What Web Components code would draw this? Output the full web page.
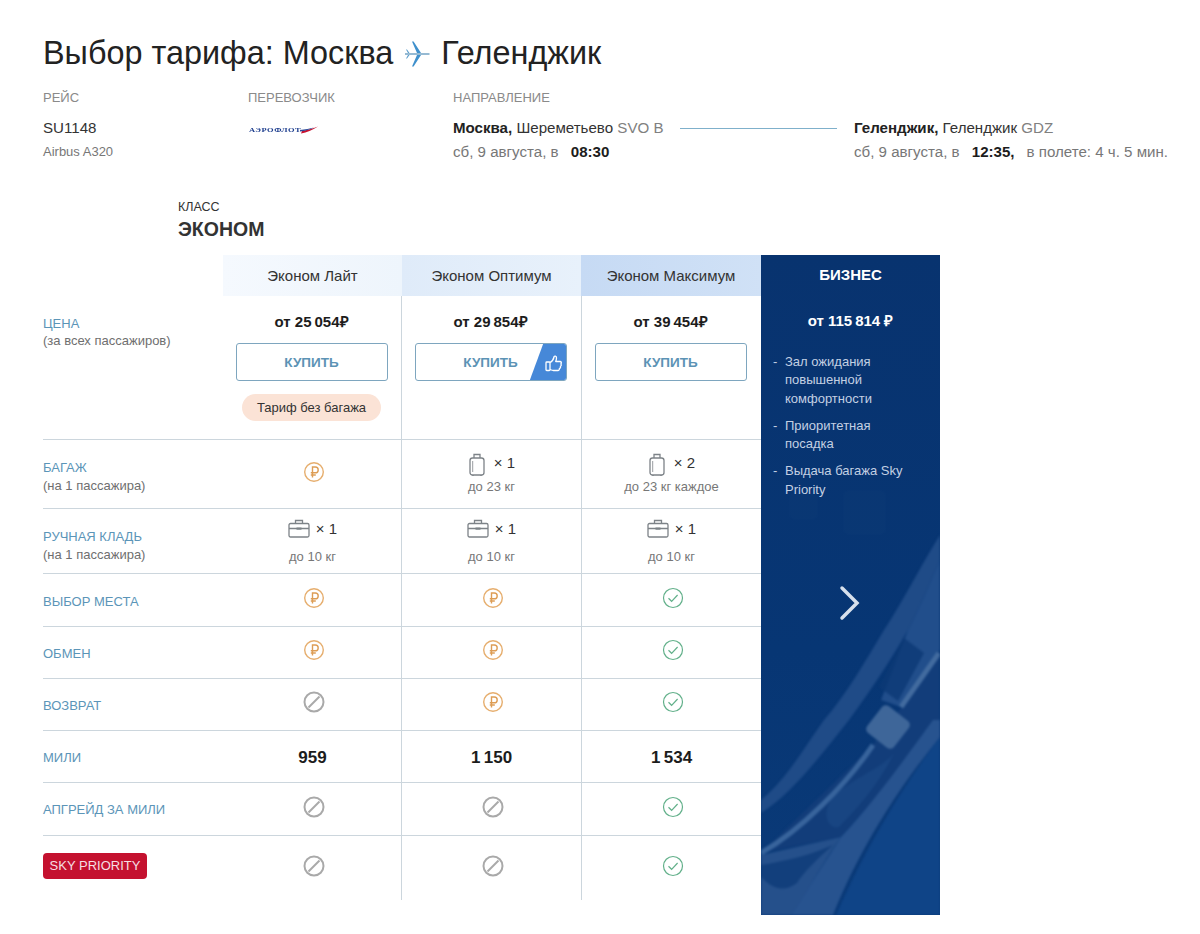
<!DOCTYPE html>
<html lang="ru">
<head>
<meta charset="utf-8">
<title>Выбор тарифа</title>
<style>
  html, body { margin: 0; background: #fff; }
  body { font-family: "Liberation Sans", Arial, sans-serif; color: #1c1c1c; }
</style>
</head>
<body>
<fare-page>
  <flight-head></flight-head>
  <fare-class>ЭКОНОМ</fare-class>
  <fare-board>
    <fare-header>
      <fare-title slot="a" tone="lite">Эконом Лайт</fare-title>
      <fare-title slot="b" tone="optimum">Эконом Оптимум</fare-title>
      <fare-title slot="c" tone="max">Эконом Максимум</fare-title>
    </fare-header>

    <fare-row style="height:144px" align="top" label="ЦЕНА" note="(за всех пассажиров)">
      <fare-price slot="a" price="от 25&#8201;054" chip="Тариф без багажа"></fare-price>
      <fare-price slot="b" price="от 29&#8201;854" liked></fare-price>
      <fare-price slot="c" price="от 39&#8201;454"></fare-price>
    </fare-row>
    <fare-row style="height:69px" label="БАГАЖ" note="(на 1 пассажира)">
      <fare-icon slot="a" type="rub"></fare-icon>
      <bag-info slot="b" kind="case" count="× 1" limit="до 23 кг"></bag-info>
      <bag-info slot="c" kind="case" count="× 2" limit="до 23 кг каждое"></bag-info>
    </fare-row>
    <fare-row style="height:65px;--label-pad:10px" label="РУЧНАЯ КЛАДЬ" note="(на 1 пассажира)">
      <bag-info slot="a" kind="brief" count="× 1" limit="до 10 кг"></bag-info>
      <bag-info slot="b" kind="brief" count="× 1" limit="до 10 кг"></bag-info>
      <bag-info slot="c" kind="brief" count="× 1" limit="до 10 кг"></bag-info>
    </fare-row>
    <fare-row style="height:53px" label="ВЫБОР МЕСТА">
      <fare-icon slot="a" type="rub"></fare-icon>
      <fare-icon slot="b" type="rub"></fare-icon>
      <fare-icon slot="c" type="ok"></fare-icon>
    </fare-row>
    <fare-row style="height:52px" label="ОБМЕН">
      <fare-icon slot="a" type="rub"></fare-icon>
      <fare-icon slot="b" type="rub"></fare-icon>
      <fare-icon slot="c" type="ok"></fare-icon>
    </fare-row>
    <fare-row style="height:52px" label="ВОЗВРАТ">
      <fare-icon slot="a" type="no"></fare-icon>
      <fare-icon slot="b" type="rub"></fare-icon>
      <fare-icon slot="c" type="ok"></fare-icon>
    </fare-row>
    <fare-row style="height:52px" label="МИЛИ">
      <fare-miles slot="a">959</fare-miles>
      <fare-miles slot="b">1&#8201;150</fare-miles>
      <fare-miles slot="c">1&#8201;534</fare-miles>
    </fare-row>
    <fare-row style="height:53px;--label-pad:0px" label="АПГРЕЙД ЗА МИЛИ">
      <fare-icon slot="a" type="no"></fare-icon>
      <fare-icon slot="b" type="no"></fare-icon>
      <fare-icon slot="c" type="ok"></fare-icon>
    </fare-row>
    <fare-row style="height:65px" last>
      <sky-badge slot="label">SKY PRIORITY</sky-badge>
      <fare-icon slot="a" type="no"></fare-icon>
      <fare-icon slot="b" type="no"></fare-icon>
      <fare-icon slot="c" type="ok"></fare-icon>
    </fare-row>

    <business-panel slot="side"></business-panel>
  </fare-board>
</fare-page>

<script>
/**
 * Small helper: every element gets an open shadow root with its own markup.
 */
function render(el, html) {
    if (!el.shadowRoot) el.attachShadow({mode: "open"});
    el.shadowRoot.innerHTML = html;
}

class FarePage extends HTMLElement {
    connectedCallback() {
        render(this, `
            <style>
                :host { display: block; padding: 32px 0 19px 43px; }
            </style>
            <slot></slot>`);
    }
}

class FlightHead extends HTMLElement {
    connectedCallback() {
        render(this, `
            <style>
                :host { display: block; }
                h1 { margin: 0; font: 400 32.4px/42px "Liberation Sans", sans-serif; color: #222; display: flex; align-items: center; }
                h1 svg { margin: 1px 11px 0 11px; }
                .cols { display: flex; margin-top: 17px; }
                .flight { width: 205px; }
                .carrier { width: 205px; }
                .cap { font-size: 13px; line-height: 14px; color: #8a8a8a; }
                .val { font-size: 15.1px; line-height: 18px; margin-top: 14px; color: #333; white-space: nowrap; }
                .sub { font-size: 13px; line-height: 16px; margin-top: 7px; color: #777; }
                .time { font-size: 15.1px; line-height: 18px; margin-top: 6px; color: #777; white-space: nowrap; }
                .time b { color: #1c1c1c; margin: 0 8px; }
                .time b.mid { margin-right: 12px; }
                .grey { color: #808080; }
                .route { display: flex; }
                .from { width: 227px; }
                .line { width: 157px; height: 1px; background: #7fb0cb; margin: 23px 17px 0 0; }
                .logo { display: flex; align-items: center; margin-top: 17px; height: 16px; }
                .logo span { font: 700 6.4px/8px "Liberation Serif", serif; letter-spacing: .35px; color: #1f3f8f; transform: scaleX(1.32); transform-origin: left; margin-left: 1px; width: 52px; white-space: nowrap; }
                .logo svg { margin-left: -1px; }
            </style>
            <h1>Выбор тарифа: Москва
                <svg width="26" height="26" viewBox="0 0 26 26">
                    <path d="M1 12.400H25.500V13.600H1z" fill="#4f8cb5"/>
                    <path d="M8 .5h1.600L17 12h-4zM8 25.500h1.600L17 14h-4z" fill="#3f90cc"/>
                    <path d="M2 8.500h1L5.500 12h-1.500zM2 17.500h1L5.500 14h-1.500z" fill="#5b9ccb"/>
                </svg>
                Геленджик</h1>
            <div class="cols">
                <div class="flight">
                    <div class="cap">РЕЙС</div>
                    <div class="val">SU1148</div>
                    <div class="sub">Airbus A320</div>
                </div>
                <div class="carrier">
                    <div class="cap">ПЕРЕВОЗЧИК</div>
                    <div class="logo"><span>АЭРОФЛОТ</span>
                        <svg width="18" height="8" viewBox="0 0 18 8"><path d="M1 7.500C7 6.500 12 4 18 .5 14 2 8 4 2 5z" fill="#c8102e"/><path d="M0 5.500C5 5 10 3.500 14 1.500 10 2.500 5 3.500 0 4z" fill="#2a4a9a"/></svg>
                    </div>
                </div>
                <div>
                    <div class="cap">НАПРАВЛЕНИЕ</div>
                    <div class="route">
                        <div class="from">
                            <div class="val"><b style="color:#222">Москва,</b> Шереметьево <span class="grey">SVO B</span></div>
                            <div class="time">сб, 9 августа, в <b>08:30</b></div>
                        </div>
                        <div class="line"></div>
                        <div>
                            <div class="val"><b style="color:#222">Геленджик,</b> Геленджик <span class="grey">GDZ</span></div>
                            <div class="time">сб, 9 августа, в <b class="mid">12:35,</b>в полете: 4 ч. 5 мин.</div>
                        </div>
                    </div>
                </div>
            </div>`);
    }
}

class FareClass extends HTMLElement {
    connectedCallback() {
        render(this, `
            <style>
                :host { display: block; margin: 39px 0 0 135px; }
                .cap { font-size: 12.5px; line-height: 14px; color: #333; }
                .name { font-size: 19.5px; line-height: 24px; font-weight: 700; color: #333; margin-top: 3px; }
            </style>
            <div class="cap">КЛАСС</div>
            <div class="name"><slot></slot></div>`);
    }
}

class FareBoard extends HTMLElement {
    connectedCallback() {
        render(this, `
            <style>
                :host { display: flex; align-items: flex-start; margin-top: 14px; }
                .rows { width: 718px; }
            </style>
            <div class="rows"><slot></slot></div>
            <slot name="side"></slot>`);
    }
}

/* columns of the board: label, then the three economy fares */
const COLS = "180px 179px 179px 180px";

class FareHeader extends HTMLElement {
    connectedCallback() {
        render(this, `
            <style>
                :host { display: grid; grid-template-columns: ${COLS}; height: 41px; }
                .gap { grid-column: 1; }
            </style>
            <div class="gap"></div>
            <slot name="a"></slot><slot name="b"></slot><slot name="c"></slot>`);
    }
}

class FareTitle extends HTMLElement {
    connectedCallback() {
        const bg = {
            lite: "linear-gradient(90deg,#f5f9fe,#eef5fc)",
            optimum: "linear-gradient(90deg,#dfebf9,#e8f1fb)",
            max: "linear-gradient(90deg,#c6daf4,#d0e1f6)"
        }[this.getAttribute("tone")];
        render(this, `
            <style>
                :host { display: flex; align-items: center; justify-content: center; background: ${bg}; font-size: 15px; color: #333; }
            </style>
            <slot></slot>`);
    }
}

class FareRow extends HTMLElement {
    connectedCallback() {
        const top = this.getAttribute("align") === "top";
        const label = this.getAttribute("label");
        const note = this.getAttribute("note");
        render(this, `
            <style>
                :host { display: grid; grid-template-columns: ${COLS}; box-sizing: border-box; border-bottom: 1px solid ${this.hasAttribute("last") ? "transparent" : "#ccd6dd"}; }
                .label { display: flex; flex-direction: column; justify-content: ${top ? "flex-start" : "center"}; padding-top: var(--label-pad, ${top ? "20px" : note ? "6px" : "2px"}); box-sizing: border-box; }
                .name { font-size: 13px; line-height: 15px; color: #5b95b8; white-space: nowrap; }
                .note { font-size: 13px; line-height: 16px; margin-top: ${top ? "2px" : "3px"}; color: #6f6f6f; white-space: nowrap; }
                .cell { display: flex; justify-content: center; align-items: ${top ? "flex-start" : "center"}; box-sizing: border-box; }
                .cell.mid { border-left: 1px solid #ccd6dd; }
                .cell.b { margin-left: -1px; }
                ::slotted([slot="label"]) { margin-top: -6px; }
            </style>
            <div class="label">
                ${label ? `<div class="name">${label}</div>` : ""}
                ${note ? `<div class="note">${note}</div>` : ""}
                <slot name="label"></slot>
            </div>
            <div class="cell"><slot name="a"></slot></div>
            <div class="cell mid b"><slot name="b"></slot></div>
            <div class="cell mid"><slot name="c"></slot></div>`);
    }
}

class FarePrice extends HTMLElement {
    connectedCallback() {
        const chip = this.getAttribute("chip");
        const liked = this.hasAttribute("liked");
        render(this, `
            <style>
                :host { display: flex; flex-direction: column; align-items: center; padding-top: 17px; margin-left: -2px; }
                .price { font-size: 15px; line-height: 18px; font-weight: 700; color: #1c1c1c; white-space: nowrap; }
                button { all: unset; box-sizing: border-box; position: relative; display: flex; align-items: center; justify-content: center; width: 152px; height: 38px; margin-top: 12px; border: 1px solid #7ea6bf; border-radius: 3px; font-size: 13.5px; font-weight: 700; color: #5c93b5; overflow: hidden; }
                .like { position: absolute; right: -1px; top: -1px; bottom: -1px; width: 37px; background: #4688d8; clip-path: polygon(14px 0, 100% 0, 100% 100%, 0 100%); }
                .like svg { position: absolute; right: 4px; top: 11px; }
                .chip { margin-top: 13px; padding: 0 15px; height: 27px; line-height: 27px; border-radius: 14px; background: #fbe3d6; font-size: 13px; color: #333; white-space: nowrap; }
            </style>
            <div class="price">${this.getAttribute("price")}<span>₽</span></div>
            <button>КУПИТЬ${liked ? `<span class="like"><svg width="18" height="18" viewBox="0 0 18 18" fill="none" stroke="#fff" stroke-width="1.300" stroke-linejoin="round"><rect x="1" y="8" width="4" height="8.500" rx=".8"/><path d="M5 8.500c2-1 3.500-3 4-5.500.2-1.300 2.500-1.200 2.500 1 0 1.300-.4 2.500-.8 3.500h4.300c1.500 0 1.800 1.800.8 2.400.8.800.6 2-.4 2.400.5 1-.1 2-1 2.200.2 1-.5 2-1.500 2H8.500c-1.500 0-2.300-.5-3.500-1"/></svg></span>` : ""}</button>
            ${chip ? `<div class="chip">${chip}</div>` : ""}`);
    }
}

const ICONS = {
    rub: `<circle cx="11" cy="11" r="9.300" stroke="#e6ae6e" stroke-width="1.400"/>
          <path d="M9.500 16.500V6h2.800a2.900 2.900 0 0 1 0 5.800H7.800M7.800 14h5" stroke="#dd9d55" stroke-width="1.400"/>`,
    ok: `<circle cx="11" cy="11" r="9.500" stroke="#62b08a" stroke-width="1.200"/>
         <path d="M6.500 11.300l3.100 3 6-6.300" stroke="#62b08a" stroke-width="1.200"/>`,
    no: `<circle cx="11" cy="11" r="9.500" stroke="#a9a9a9" stroke-width="2"/>
         <path d="M5.500 16.500L16.500 5.500" stroke="#a9a9a9" stroke-width="2"/>`
};

class FareIcon extends HTMLElement {
    connectedCallback() {
        render(this, `
            <style>
                :host { display: block; width: 22px; height: 22px; margin: -5px 0 0 3px; }
                svg { display: block; }
            </style>
            <svg width="22" height="22" viewBox="0 0 22 22" fill="none">${ICONS[this.getAttribute("type")]}</svg>`);
    }
}

const BAGS = {
    "case": `<svg width="18" height="24" viewBox="0 0 18 24" fill="none" stroke="#7d8388" stroke-width="1.300"><path d="M6 5V1.500h6V5"/><rect x="2" y="5" width="14" height="17" rx="2.500"/><path d="M4.700 8v11" stroke-width=".8"/><path d="M5 22v1M13 22v1"/></svg>`,
    brief: `<svg width="22" height="19" viewBox="0 0 22 19" fill="none" stroke="#7d8388" stroke-width="1.300"><rect x="1" y="4.500" width="20" height="13.500" rx="1.500"/><path d="M7.500 4.500V1.500h7V4.500M1 9.500h20"/><rect x="8.500" y="8.500" width="5" height="2.200" fill="#7d8388" stroke="none"/></svg>`
};

class BagInfo extends HTMLElement {
    connectedCallback() {
        const kind = this.getAttribute("kind");
        render(this, `
            <style>
                :host { display: flex; flex-direction: column; align-items: center; margin-top: ${kind === "case" ? "-2px" : "-1px"}; }
                .top { display: flex; align-items: center; gap: ${kind === "case" ? "8px" : "6px"}; font-size: 15px; color: #333; height: ${kind === "case" ? "24px" : "22px"}; }
                .top svg { display: block; }
                .top span { margin-bottom: ${kind === "case" ? "4px" : "0"}; }
                .limit { font-size: 13px; line-height: 15px; color: #777; margin-top: ${kind === "case" ? "2px" : "10px"}; white-space: nowrap; }
            </style>
            <div class="top">${BAGS[kind]}<span>${this.getAttribute("count")}</span></div>
            <div class="limit">${this.getAttribute("limit")}</div>`);
    }
}

class FareMiles extends HTMLElement {
    connectedCallback() {
        render(this, `
            <style>
                :host { display: block; font-size: 17px; font-weight: 700; color: #1c1c1c; margin-top: 3px; }
            </style>
            <slot></slot>`);
    }
}

class SkyBadge extends HTMLElement {
    connectedCallback() {
        render(this, `
            <style>
                :host { display: block; width: 104px; height: 26px; line-height: 26px; text-align: center; background: #c4112f; border-radius: 4px; color: #f6dfe3; font-size: 13px; white-space: nowrap; }
            </style>
            <slot></slot>`);
    }
}

class BusinessPanel extends HTMLElement {
    connectedCallback() {
        render(this, `
            <style>
                :host { display: block; position: relative; width: 179px; height: 660px; overflow: hidden; color: #fff; background: linear-gradient(180deg,#08336f 0%,#073674 60%,#0a3a78 100%); }
                .deco { position: absolute; inset: 0; filter: blur(.8px); }
                .body { position: relative; }
                .name { text-align: center; font-size: 15px; font-weight: 700; line-height: 18px; padding-top: 11px; }
                .price { text-align: center; font-size: 15px; font-weight: 700; line-height: 18px; margin-top: 28px; white-space: nowrap; }
                ul { list-style: none; margin: 23px 26px 0 12px; padding: 0; font-size: 13px; line-height: 18.300px; color: #c3d0e3; }
                li { position: relative; padding-left: 12px; margin-bottom: 9px; }
                li::before { content: "-"; position: absolute; left: 0; }
                .next { position: absolute; left: 78px; top: 330px; }
            </style>
            <svg class="deco" width="179" height="660" viewBox="0 0 179 660" fill="none">
                <defs>
                    <pattern id="mesh" width="3" height="3" patternUnits="userSpaceOnUse"><rect width="1.500" height="1.500" fill="#3a6cab" opacity=".18"/></pattern>
                </defs>
                <rect x="28" y="237" width="29" height="28" rx="5" fill="#fff" opacity=".012"/>
                <rect x="82" y="235" width="43" height="45" rx="5" fill="#fff" opacity=".012"/>
                <!-- wide arc sweeping from the right edge to the lower left -->
                <path d="M179 280C160 310 140 350 123 375 105 405 85 440 63 465 45 490 25 525 0 545V558C30 540 60 500 88 465 110 435 130 405 147 375 160 350 170 325 179 305Z" fill="#1f4b87"/>
                <!-- frame with the dark slot -->
                <path d="M147 375C160 350 170 325 179 305V395L140 452 120 445Z" fill="#214e8b"/>
                <path d="M143 383L163 398 137 446 118 432Z" fill="#0d3a76" opacity=".8"/>
                <!-- area under the rod and the dark blob -->
                <path d="M110 492L150 440 179 398V470L80 582 0 598Z" fill="#123d7a"/>
                <path d="M133 498C120 515 85 525 70 545 60 560 68 575 78 572 100 550 120 525 133 498Z" fill="#184582"/>
                <!-- second band and the meshed corner -->
                <path d="M179 482C150 520 110 580 75 660H179Z" fill="#0d4285"/>
                <path d="M179 482C150 520 110 580 75 660H179Z" fill="url(#mesh)"/>
                <path d="M172 465C150 495 115 545 80 582L30 660H72C100 590 140 530 179 482V465Z" fill="#27538f"/>
                <path d="M0 600L80 582C60 610 45 640 30 660H0Z" fill="#25508b"/>
                <path d="M0 610C25 606 50 600 72 590 55 605 42 618 36 628 20 640 8 630 0 622Z" fill="#123f7c"/>
                <!-- rod through the square -->
                <path d="M140 452L178 398" stroke="#426b9f" stroke-width="5"/>
                <path d="M112 490C85 530 40 575 0 598" stroke="#38649c" stroke-width="5"/>
                <rect x="110" y="455" width="34" height="34" rx="5" transform="rotate(38 127 472)" fill="#3e6699"/>
            </svg>
            <div class="body">
                <div class="name">БИЗНЕС</div>
                <div class="price">от 115&#8201;814 ₽</div>
                <ul>
                    <li>Зал ожидания повышенной комфортности</li>
                    <li>Приоритетная посадка</li>
                    <li>Выдача багажа Sky Priority</li>
                </ul>
            </div>
            <svg class="next" width="22" height="36" viewBox="0 0 22 36" fill="none"><path d="M3 3l15 15L3 33" stroke="#d7e0ec" stroke-width="3.500" stroke-linecap="round"/></svg>`);
    }
}

customElements.define("fare-page", FarePage);
customElements.define("flight-head", FlightHead);
customElements.define("fare-class", FareClass);
customElements.define("fare-board", FareBoard);
customElements.define("fare-header", FareHeader);
customElements.define("fare-title", FareTitle);
customElements.define("fare-row", FareRow);
customElements.define("fare-price", FarePrice);
customElements.define("fare-icon", FareIcon);
customElements.define("bag-info", BagInfo);
customElements.define("fare-miles", FareMiles);
customElements.define("sky-badge", SkyBadge);
customElements.define("business-panel", BusinessPanel);
</script>
</body>
</html>
